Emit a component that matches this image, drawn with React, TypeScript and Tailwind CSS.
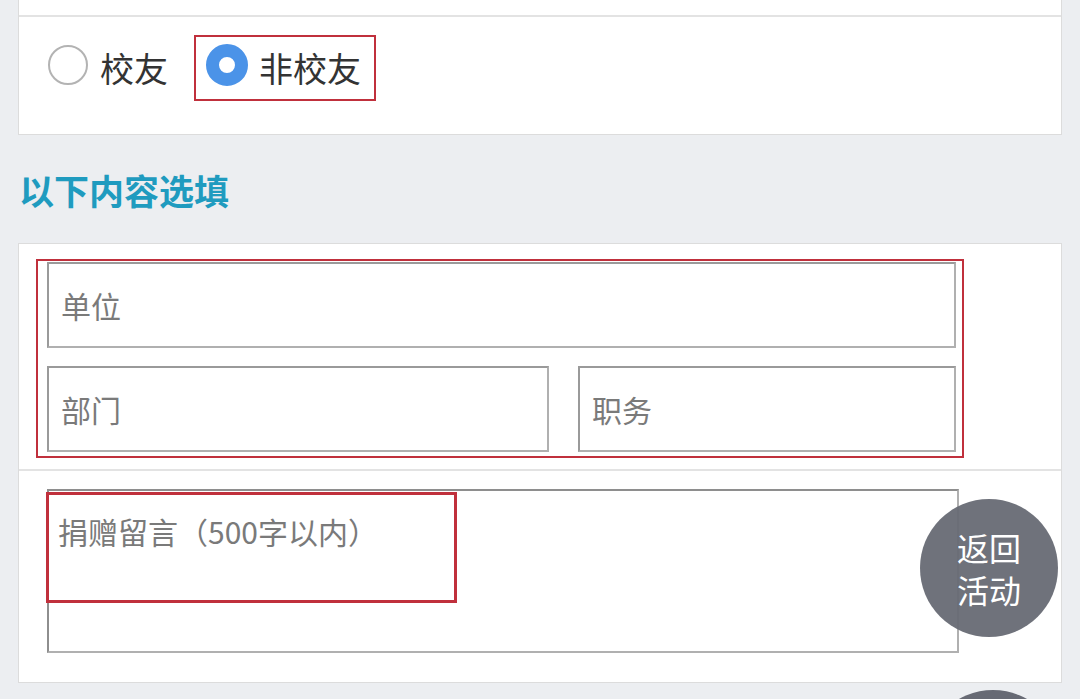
import React from "react";

const font = { fontFamily: '"Noto Sans CJK SC", "Noto Sans", sans-serif' };

const App = () => {
  return (
    <div className="relative w-[1080px] h-[699px] overflow-hidden bg-[#eceef1]" style={font}>
      {/* Card: identity */}
      <div className="mx-[18px] bg-white border-x border-b border-[#dcdcdc]">
        <div className="h-[17px] border-b-2 border-[#e3e3e3]"></div>
        <div className="h-[117px] flex items-start pt-[18px]">
          <div className="flex items-center h-[66px] pl-[29px]">
            <div className="w-[40px] h-[40px] rounded-full border-2 border-[#b3b3b3] mb-[6px]"></div>
            <span className="ml-[12px] text-[34px] leading-none text-[#333]">校友</span>
          </div>
          <div className="ml-[26px] flex items-center h-[66px] border-2 border-[#c0303c] pl-[10px] pr-[13px]">
            <div className="w-[42px] h-[42px] rounded-full border-[13px] border-[#4b93e8] bg-white mb-[6px]"></div>
            <span className="ml-[11px] text-[34px] leading-none text-[#333]">非校友</span>
          </div>
        </div>
      </div>

      {/* Section title */}
      <div className="h-[108px] flex items-center pl-[19px]">
        <span className="text-[35px] font-bold leading-none text-[#1f9bbf]">以下内容选填</span>
      </div>

      {/* Card: optional fields */}
      <div className="mx-[18px] h-[440px] bg-white border border-[#dcdcdc] flex flex-col">
        <div className="h-[227px] border-b-2 border-[#e3e3e3] pt-[15px] pl-[17px]">
          <div className="w-[928px] h-[199px] border-2 border-[#c0303c] pt-px pl-[9px] pr-[6px] flex flex-col gap-[18px]">
            <input
              placeholder="单位"
              className="h-[86px] w-full border-2 border-[#9a9a9a] border-b-[#b0b0b0] border-r-[#b0b0b0] pl-[12px] text-[30px] text-[#555] placeholder:text-[#7a7a7a] outline-none bg-white"
            />
            <div className="flex gap-[29px]">
              <input
                placeholder="部门"
                className="h-[86px] w-[502px] border-2 border-[#9a9a9a] border-b-[#b0b0b0] border-r-[#b0b0b0] pl-[12px] text-[30px] text-[#555] placeholder:text-[#7a7a7a] outline-none bg-white"
              />
              <input
                placeholder="职务"
                className="h-[86px] w-[378px] border-2 border-[#9a9a9a] border-b-[#b0b0b0] border-r-[#b0b0b0] pl-[12px] text-[30px] text-[#555] placeholder:text-[#7a7a7a] outline-none bg-white"
              />
            </div>
          </div>
        </div>
        <div className="relative pt-[18px] pl-[28px]">
          <textarea
            placeholder="捐赠留言（500字以内）"
            className="block w-[912px] h-[164px] resize-none border-2 border-[#8e8e8e] border-b-[#b0b0b0] border-r-[#b0b0b0] pl-[9px] pt-[20px] text-[30px] leading-[40px] text-[#555] placeholder:text-[#7a7a7a] outline-none bg-white"
          ></textarea>
          {/* highlight box */}
          <div className="absolute left-[27px] top-[21px] w-[411px] h-[111px] border-[3px] border-[#c0303c] pointer-events-none"></div>
        </div>
      </div>

      {/* Floating buttons */}
      <div className="absolute left-[920px] top-[499px] w-[138px] h-[138px] rounded-full bg-[#676a74]/95 flex items-center justify-center">
        <span className="text-white text-[32px] leading-[42px] text-center">
          返回
          <br />
          活动
        </span>
      </div>
      <div className="absolute left-[924px] top-[690px] w-[138px] h-[138px] rounded-full bg-[#676a74]"></div>
    </div>
  );
};

export default App;
